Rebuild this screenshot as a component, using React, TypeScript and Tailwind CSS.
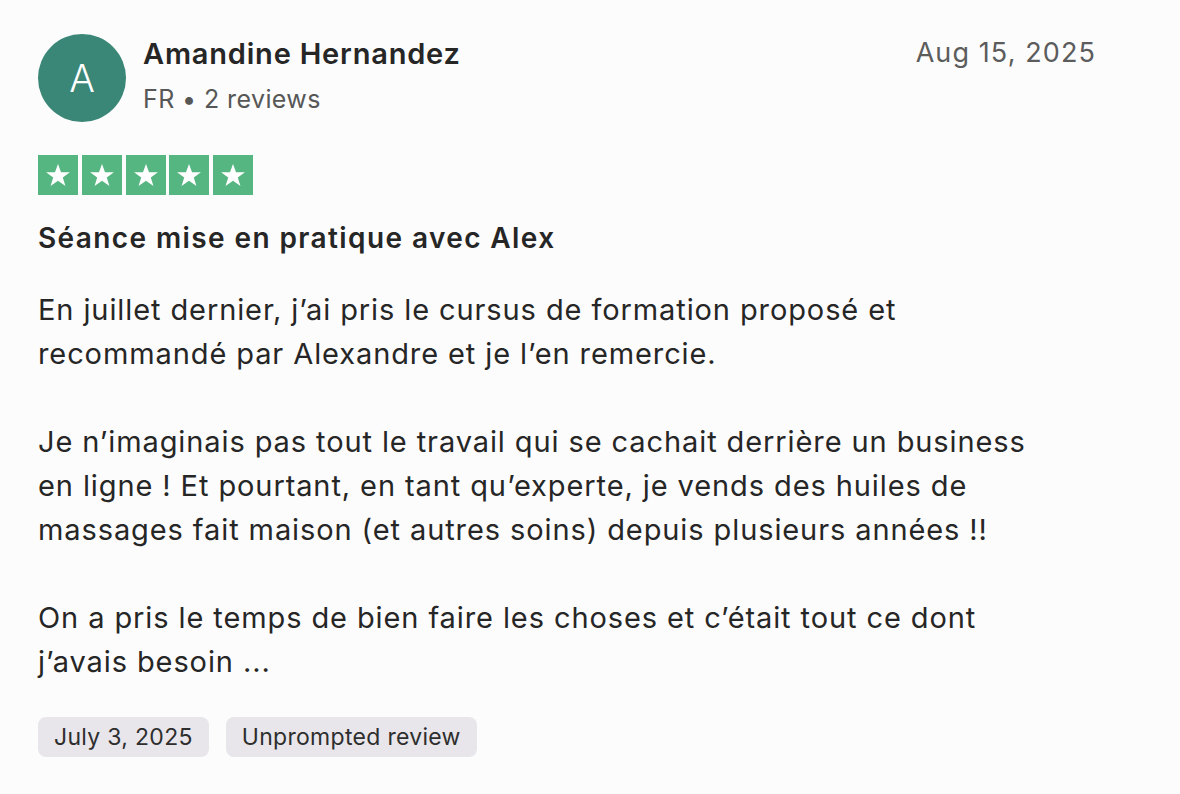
const font = { fontFamily: 'Inter, "Noto Sans", sans-serif' };

function Star() {
  return (
    <div className="w-10 h-10 bg-[#56b682] flex items-center justify-center">
      <svg width="28" height="28" viewBox="0 0 24 24">
        <path
          d="M12 2.5l2.6 7.2h7.6l-6.1 4.5 2.3 7.3L12 17l-6.4 4.5 2.3-7.3-6.1-4.5h7.6z"
          fill="#ffffff"
        />
      </svg>
    </div>
  );
}

export default function App() {
  return (
    <div className="min-h-screen bg-[#fcfcfc] text-[#2a2a2a]" style={font}>
      <div className="pl-[38px] pr-[84px] pt-[34px]">
        {/* header */}
        <div className="flex items-start justify-between">
          <div className="flex items-center gap-[17px]">
            <div className="w-[88px] h-[88px] rounded-full bg-[#3a8677] flex items-center justify-center text-white text-[38px] font-light">
              A
            </div>
            <div className="flex flex-col">
              <div className="text-[29px] font-semibold leading-[36px] tracking-[0.8px] text-[#262626] -mt-[4px]">
                Amandine Hernandez
              </div>
              <div className="text-[25px] leading-[36px] tracking-[0.4px] text-[#575757] mt-[9px]">
                FR • 2 reviews
              </div>
            </div>
          </div>
          <div className="text-[27px] leading-[36px] tracking-[1.1px] text-[#5c5c5c] pt-[1px]">Aug 15, 2025</div>
        </div>

        {/* stars */}
        <div className="flex gap-[3.75px] mt-[33px]">
          <Star />
          <Star />
          <Star />
          <Star />
          <Star />
        </div>

        {/* title */}
        <div className="mt-[26px] text-[28px] font-semibold leading-[34px] text-[#262626] tracking-[1.4px]">
          Séance mise en pratique avec Alex
        </div>

        {/* body */}
        <div className="mt-[33px] text-[29px] leading-[44px] text-[#262626] tracking-[0.9px]">
          En juillet dernier, j’ai pris le cursus de formation proposé et
          <br />
          recommandé par Alexandre et je l’en remercie.
          <br />
          <br />
          Je n’imaginais pas tout le travail qui se cachait derrière un business
          <br />
          en ligne ! Et pourtant, en tant qu’experte, je vends des huiles de
          <br />
          massages fait maison (et autres soins) depuis plusieurs années !!
          <br />
          <br />
          On a pris le temps de bien faire les choses et c’était tout ce dont
          <br />
          j’avais besoin ...
        </div>

        {/* tags */}
        <div className="flex gap-[17px] mt-[33px]">
          <div className="h-10 px-4 rounded-lg bg-[#e8e6ea] flex items-center text-[23px] tracking-[0.3px] text-[#2e2e2e]">
            July 3, 2025
          </div>
          <div className="h-10 px-4 rounded-lg bg-[#e8e6ea] flex items-center text-[23px] tracking-[0.3px] text-[#2e2e2e]">
            Unprompted review
          </div>
        </div>
      </div>
    </div>
  );
}
